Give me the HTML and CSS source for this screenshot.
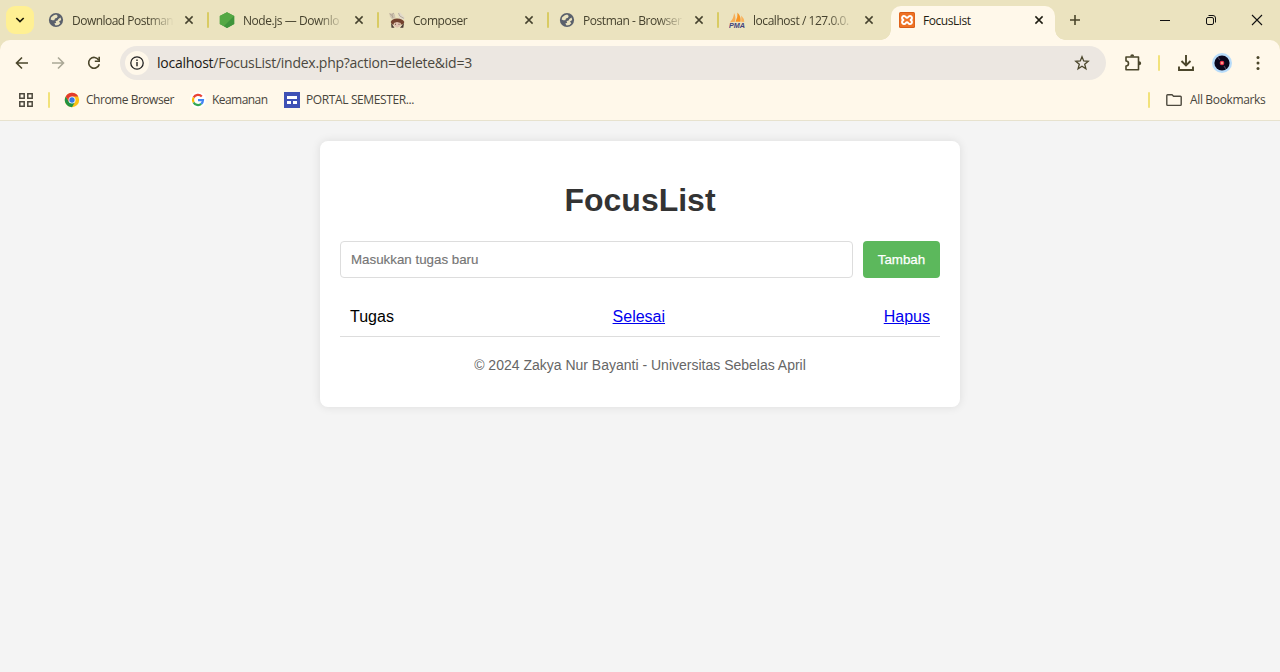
FILE: index.html
```html
<!DOCTYPE html>
<html lang="id">
<head>
<meta charset="utf-8">
<title>FocusList</title>
<link rel="stylesheet" href="styles.css">
</head>
<body>
<svg class="defs" width="0" height="0">
  <symbol id="globe" viewBox="0 0 16 16"><circle cx="8" cy="8" r="7.100" fill="#5a606b"/><path d="M8.200 2.500 5.800 3.300 3.200 5.300 2.600 7.600 4.300 8.300 6.300 8.200 7 6.600 9 5.800 9.700 4.100ZM12.600 5.600 10.300 6.900 9.900 8.300 7.500 9.200 8.200 10.700 6.300 11.400 7.600 13.500 10.500 12.900 12.300 11.200 11 9.600 13.200 8.100Z" fill="#ebe3bf"/></symbol>
  <symbol id="close" viewBox="0 0 10 10"><path d="M1.400 1.400 8.600 8.600M8.600 1.400 1.400 8.600" stroke="currentColor" stroke-width="1.500" fill="none"/></symbol>
</svg>
<header class="browser">
  <div class="tabstrip">
    <button class="tab-search"><svg width="10" height="8" viewBox="0 0 10 8"><path d="M1.300 2 5 5.600 8.700 2" fill="none" stroke="#1c1a08" stroke-width="1.700"/></svg></button>
    <div class="tab tab-first"><svg class="fav"><use href="#globe"/></svg><span class="title fade">Download Postman</span><svg class="close"><use href="#close"/></svg></div>
    <div class="tab"><svg class="fav" viewBox="0 0 16 16"><path d="M8 .2 15.200 4.100V12L8 15.900.800 12V4.100Z" fill="#449b3c"/><path d="M8 .2 15.200 4.100 5 14.300.800 12V4.100Z" fill="#55a844"/><path d="M15.200 4.100V12L8 15.900 5 14.300Z" fill="#3f953b"/></svg><span class="title fade">Node.js — Downlo</span><svg class="close"><use href="#close"/></svg></div>
    <div class="tab"><svg class="fav" viewBox="0 0 16 16"><path d="M.3 1 2.500 1.600 4.500 .8 5.800 2.500 6.500 6 3 7.200 1 4.500Z" fill="#cfc4b0"/><path d="M8.800 1 11 .3 12.800 2.500 15.700 5.500 15 7.500 10 6.200Z" fill="#e2dacb"/><path d="M.6 1.800 2.500 3 4.800 1.200M3 3 4 6M9.500 1 10.800 4 14.800 6.300" fill="none" stroke="#9c907e" stroke-width=".6"/><path d="M1.700 10Q3 7 8 6.600 13.800 6.800 15.300 10L14.200 12.500H3Z" fill="#74422e"/><path d="M4.800 11 8 10 11.800 11 11.500 14 8 15.800 5 14Z" fill="#e2c3b1"/><path d="M2 11 5.500 15.700H2.500ZM15 11 11 15.700H14.300Z" fill="#4a3a34"/><path d="M6 12.300H7M9.500 12.300H10.500" stroke="#493028" stroke-width=".8"/></svg><span class="title fade">Composer</span><svg class="close"><use href="#close"/></svg></div>
    <div class="tab"><svg class="fav"><use href="#globe"/></svg><span class="title fade">Postman - Browser</span><svg class="close"><use href="#close"/></svg></div>
    <div class="tab tab-before-active"><svg class="fav" viewBox="0 0 16 16"><path d="M5 1Q7.300 5 6 9.800L1 10.300Q5 6 5 1Z" fill="#f5ad57"/><path d="M8.500 .5Q12.500 5 11.500 9.800L6.500 9.800Q9 5 8.500 .5Z" fill="#f89421"/><path d="M12.300 3.500Q15.300 6.500 15.300 10L12.200 9.800Z" fill="#f9b25c"/><text x="0" y="15.500" textLength="16" lengthAdjust="spacingAndGlyphs" class="pma">PMA</text></svg><span class="title fade">localhost / 127.0.0.</span><svg class="close"><use href="#close"/></svg></div>
    <div class="tab tab-active"><svg class="fav" viewBox="0 0 16 16"><rect width="16" height="16" rx="1.500" fill="#d95d17"/><rect x=".7" y="1" width="14.600" height="14" rx="1" fill="#ee7225"/><path d="M5.200 8C2.400 8 2.400 3.900 5 3.900 7 3.900 6.600 5.800 8 5.800S9 3.900 11 3.900C13.600 3.900 13.600 8 10.800 8 13.600 8 13.600 12.100 11 12.100 9 12.100 9.400 10.200 8 10.200S7 12.100 5 12.100C2.400 12.100 2.400 8 5.200 8Z" fill="none" stroke="#fff" stroke-width="2"/></svg><span class="title">FocusList</span><svg class="close"><use href="#close"/></svg></div>
    <button class="new-tab"><svg width="12" height="12" viewBox="0 0 12 12"><path d="M6 1V11M1 6H11" stroke="#4b462b" stroke-width="1.600"/></svg></button>
    <div class="window-controls">
      <svg width="12" height="12" viewBox="0 0 12 12"><path d="M1 6.500H11" stroke="#111"/></svg>
      <svg width="12" height="12" viewBox="0 0 12 12"><rect x="1.500" y="3.500" width="7" height="7" rx="1.500" fill="none" stroke="#111"/><path d="M3.500 1.500H8Q10.500 1.500 10.500 4V8.500" fill="none" stroke="#111"/></svg>
      <svg width="12" height="12" viewBox="0 0 12 12"><path d="M1 1 11 11M11 1 1 11" stroke="#111" stroke-width="1.100"/></svg>
    </div>
  </div>
  <div class="chrome-body">
    <div class="toolbar">
      <div class="nav">
        <svg width="16" height="16" viewBox="0 0 16 16"><path d="M14 8H3M8 2.500 2.500 8 8 13.500" fill="none" stroke="#4b462b" stroke-width="1.600"/></svg>
        <svg width="16" height="16" viewBox="0 0 16 16"><path d="M2 8H13M8 2.500 13.500 8 8 13.500" fill="none" stroke="#aba896" stroke-width="1.600"/></svg>
        <svg width="16" height="16" viewBox="0 0 16 16"><path d="M12.700 5A5.400 5.400 0 1 0 13.300 9.200" fill="none" stroke="#4b462b" stroke-width="1.600"/><path d="M13.200 1.800V6.200H8.800" fill="none" stroke="#4b462b" stroke-width="1.600"/></svg>
      </div>
      <div class="omnibox">
        <span class="site-info"><svg width="16" height="16" viewBox="0 0 16 16"><circle cx="8" cy="8" r="6.200" fill="none" stroke="#222" stroke-width="1.300"/><path d="M8 7V11.300M8 4.500V6" stroke="#222" stroke-width="1.400"/></svg></span>
        <span class="url"><b>localhost</b>/FocusList/index.php?action=delete&amp;id=3</span>
        <svg class="star" width="16" height="16" viewBox="0 0 16 16"><path d="M8 1.800 9.700 6 14.200 6.300 10.700 9.200 11.900 13.700 8 11.200 4.100 13.700 5.300 9.200 1.800 6.300 6.300 6Z" fill="none" stroke="#4b462b" stroke-width="1.300"/></svg>
      </div>
      <div class="actions">
        <svg width="18" height="18" viewBox="0 0 18 18"><path d="M2 3H14.500V15.800H2V12Q4.500 12 4.500 9.500T2 7Z" fill="none" stroke="#4b462b" stroke-width="1.600" stroke-linejoin="round"/><path d="M6.200 2.600Q6.200.3 8.200.3T10.200 2.600ZM15 7.300Q17.200 7.300 17.200 9.300T15 11.300Z" fill="#4b462b"/></svg>
        <i class="bar"></i>
        <svg width="18" height="18" viewBox="0 0 18 18"><path d="M9 1V11M4.500 7 9 11.400 13.500 7M2 12.500V16H16V12.500" fill="none" stroke="#4b462b" stroke-width="1.900"/></svg>
        <svg width="20" height="20" viewBox="0 0 20 20"><circle cx="10" cy="10" r="10" fill="#b8dcfa"/><circle cx="10" cy="10" r="7.600" fill="#0b071c"/><path d="M6 4.500 8 7M12 13 14 16" stroke="#4c4159" stroke-width="1.200"/><circle cx="10" cy="10" r="2.300" fill="#ec3550"/><circle cx="10" cy="10" r=".9" fill="#ffc8a0"/></svg>
        <svg width="4" height="16" viewBox="0 0 4 16"><g fill="#4b462b"><circle cx="2" cy="2.500" r="1.500"/><circle cx="2" cy="8" r="1.500"/><circle cx="2" cy="13.500" r="1.500"/></g></svg>
      </div>
    </div>
    <nav class="bookmarks">
      <svg class="apps" width="16" height="16" viewBox="0 0 16 16"><path d="M1.800 1.800H6.200V6.200H1.800ZM9.800 1.800H14.200V6.200H9.800ZM1.800 9.800H6.200V14.200H1.800ZM9.800 9.800H14.200V14.200H9.800Z" fill="none" stroke="#4d493e" stroke-width="1.500"/></svg>
      <i class="bar"></i>
      <a class="bm bm-chrome"><svg width="16" height="16" viewBox="0 0 16 16"><circle cx="8" cy="8" r="7.200" fill="#fbc116"/><path d="M1.760 4.400A7.200 7.200 0 0 0 8 15.200L11.100 9.800 8 8 4.900 9.800Z" fill="#229342"/><path d="M1.760 4.400A7.200 7.200 0 0 1 14.240 4.400H8L4.900 9.800Z" fill="#e33b2e"/><circle cx="8" cy="8" r="3.500" fill="#fff"/><circle cx="8" cy="8" r="2.700" fill="#3478e5"/></svg><span>Chrome Browser</span></a>
      <a class="bm bm-google"><svg width="16" height="16" viewBox="0 0 16 16"><circle cx="8" cy="8" r="8" fill="#fff"/><g fill="none" stroke-width="2.200"><path d="M11.800 4.500A5 5 0 0 0 3.600 5.600" stroke="#ea4335"/><path d="M3.600 5.600A5 5 0 0 0 3.600 10.400" stroke="#fbbc05"/><path d="M3.600 10.400A5 5 0 0 0 11.200 11.900" stroke="#34a853"/><path d="M11.200 11.900A5 5 0 0 0 13 8.100H8" stroke="#4285f4"/></g></svg><span>Keamanan</span></a>
      <a class="bm bm-portal"><svg width="16" height="16" viewBox="0 0 16 16"><rect width="16" height="16" fill="#3f51b5"/><path d="M3 4H13V7H3ZM3 9H7V12H3ZM9 9H13V12H9Z" fill="#fff"/></svg><span>PORTAL SEMESTER...</span></a>
      <i class="bar bar-right"></i>
      <a class="bm bm-all"><svg width="16" height="16" viewBox="0 0 16 16"><path d="M.8 3.500Q.8 2.700 1.600 2.700H6L7.600 4.300H14.400Q15.200 4.300 15.200 5.100V12.600Q15.200 13.400 14.400 13.400H1.600Q.8 13.400.8 12.600Z" fill="none" stroke="#4d493e" stroke-width="1.400"/></svg><span>All Bookmarks</span></a>
    </nav>
  </div>
</header>
<main class="container">
  <h1>FocusList</h1>
  <form class="task-form"><input type="text" placeholder="Masukkan tugas baru"><button type="button">Tambah</button></form>
  <ul class="tasks"><li><span>Tugas</span><a href="#">Selesai</a><a href="#">Hapus</a></li></ul>
  <footer>© 2024 Zakya Nur Bayanti - Universitas Sebelas April</footer>
</main>
</body>
</html>
```
FILE: styles.css
```css
* { box-sizing: border-box; }
body { margin: 0; background: #f4f4f4; font-family: "Liberation Sans", Arial, sans-serif; height: 672px; overflow: hidden; }
.defs { position: absolute; }
svg { display: block; flex: none; }
.browser { background: #ebe3bf; font-family: "Open Sans", sans-serif; font-size: 12px; color: #46422e; }
.browser button { border: 0; padding: 0; background: none; display: flex; align-items: center; justify-content: center; flex: none; }

.tabstrip { display: flex; align-items: center; height: 40px; padding-left: 6px; }
.tabstrip .tab-search { width: 28px; height: 28px; border-radius: 9px; background: #fff093; margin-right: 4px; }
.tab { display: flex; align-items: center; width: 170px; height: 40px; padding: 0 15px 0 10px; position: relative; flex: none; }
.tab-first { width: 171px; }
.fav { width: 16px; height: 16px; margin-right: 8px; }
.title { flex: 1; min-width: 0; white-space: nowrap; line-height: 18px; letter-spacing: -0.45px; margin-right: 11px; padding-top: 1px; }
.fade { -webkit-mask-image: linear-gradient(90deg, #000 75%, transparent 101%); mask-image: linear-gradient(90deg, #000 75%, transparent 101%); }
.tab-first .title { letter-spacing: -0.52px; }
.close { width: 10px; height: 10px; }
.tab::after { content: ""; position: absolute; right: 0; top: 12px; width: 2px; height: 16px; background: #d9cb63; border-radius: 1px; }
.tab-before-active::after { display: none; }
.tab-active { color: #1f1d12; z-index: 0; }
.tab-active::before { content: ""; position: absolute; z-index: -1; left: 2px; right: 4px; top: 6px; bottom: 0; background: #fff8ea; border-radius: 10px 10px 0 0; }
.tab-active::after { z-index: -1; left: -8px; right: -6px; top: 30px; width: auto; height: 10px; border-radius: 0; background: radial-gradient(circle at 0 0, transparent 9.5px, #fff8ea 10px) left / 10px 10px no-repeat, radial-gradient(circle at 100% 0, transparent 9.5px, #fff8ea 10px) right / 10px 10px no-repeat; }
.pma { font: italic bold 6.5px "Liberation Sans", sans-serif; fill: #42427c; }
.new-tab { width: 32px; height: 28px; }
.window-controls { margin-left: auto; display: flex; gap: 34px; padding-right: 17px; }

.chrome-body { height: 81px; background: #fff8ea; border-bottom: 1px solid #e7e2ce; border-radius: 10px 10px 0 0; }
.toolbar { display: flex; align-items: center; height: 46px; }
.nav { display: flex; gap: 20px; padding-left: 14px; width: 120px; }
.omnibox { display: flex; align-items: center; width: 986px; height: 34px; border-radius: 17px; background: #ece7e1; padding: 0 16px 0 5px; }
.site-info { display: flex; align-items: center; justify-content: center; width: 24px; height: 24px; border-radius: 50%; background: #fff8ea; margin-right: 8px; }
.url { flex: 1; font-size: 14px; line-height: 20px; letter-spacing: -0.26px; color: #4a473e; }
.url b { font-weight: 400; color: #1b1a16; }
.actions { display: flex; align-items: center; padding-left: 18px; }
.actions svg:nth-of-type(1) { margin-right: 16px; }
.actions .bar { margin-right: 17px; }
.actions svg:nth-of-type(2) { margin-right: 17px; }
.actions svg:nth-of-type(3) { margin-right: 24px; }
.bar { width: 2px; height: 16px; background: #f2e27b; border-radius: 1px; flex: none; }

.bookmarks { display: flex; align-items: center; height: 28px; padding: 0 14px 0 18px; color: #48453c; }
.apps { margin-right: 14px; }
.bm { display: flex; align-items: center; letter-spacing: -0.48px; white-space: nowrap; }
.bm span { padding-bottom: 1px; }
.bm svg { margin-right: 6px; }
.bm-chrome { margin-left: 14px; width: 126px; }
.bm-google { width: 94px; letter-spacing: -0.55px; }
.bm-portal { letter-spacing: -0.38px; }
.bar-right { margin-left: auto; }
.bm-all { margin-left: 16px; width: 100px; letter-spacing: -0.35px; }
.bm-all svg { margin-right: 8px; }

.container { width: 640px; height: 266px; margin: 20px auto 0; padding: 20px; background: #fff; border-radius: 8px; box-shadow: 0 0 10px rgba(0, 0, 0, 0.1); }
h1 { margin: 21px 0 22px; font-size: 32px; line-height: 37px; color: #333; text-align: center; }
.task-form { display: flex; gap: 10px; height: 37px; margin-bottom: 20px; }
.task-form input { flex: 1; padding: 10px; border: 1px solid #ddd; border-radius: 4px; font: 13.333px "Liberation Sans", Arial, sans-serif; }
.task-form input::placeholder { color: #757575; -webkit-text-stroke: 0.15px #757575; }
.task-form button { width: 77px; border: 0; padding: 0; border-radius: 4px; background: #5cb85c; color: #fff; font: 13.333px "Liberation Sans", Arial, sans-serif; -webkit-text-stroke: 0.25px #fff; }
.tasks { list-style: none; margin: 0; padding: 0; }
.tasks li { display: flex; justify-content: space-between; padding: 10px; border-bottom: 1px solid #ddd; font-size: 16px; line-height: 18px; }
.tasks a { color: #0000ee; }
footer { margin-top: 20px; text-align: center; font-size: 14px; line-height: 16px; color: #666; }
```
